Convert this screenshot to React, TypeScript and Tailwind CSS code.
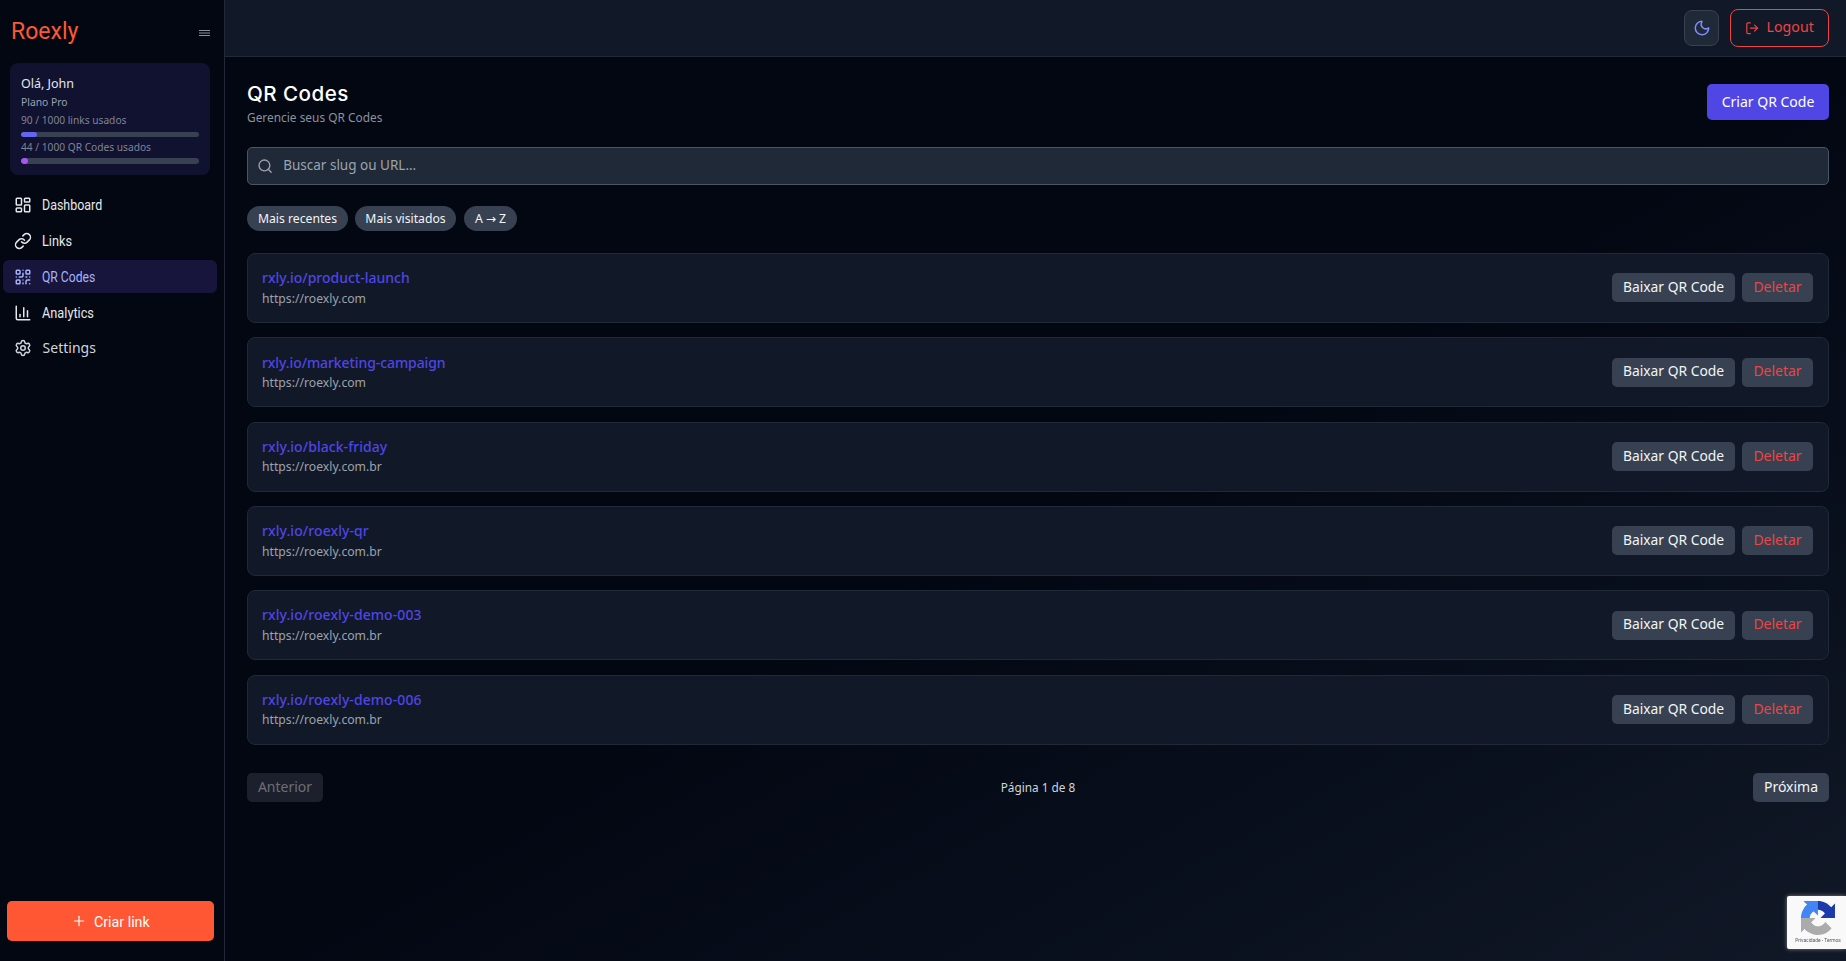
import React from 'react'
import { ChartColumn, LayoutDashboard, Link, LogOut, Moon, Plus, QrCode, Search, Settings } from 'lucide-react'

interface QrItem {
  slug: string
  url: string
  tracking: string
}

const qrCodes: QrItem[] = [
  { slug: 'rxly.io/product-launch', url: 'https://roexly.com', tracking: 'tracking-normal' },
  { slug: 'rxly.io/marketing-campaign', url: 'https://roexly.com', tracking: 'tracking-[-0.09px]' },
  { slug: 'rxly.io/black-friday', url: 'https://roexly.com.br', tracking: 'tracking-[0.06px]' },
  { slug: 'rxly.io/roexly-qr', url: 'https://roexly.com.br', tracking: 'tracking-[0.08px]' },
  { slug: 'rxly.io/roexly-demo-003', url: 'https://roexly.com.br', tracking: 'tracking-[0.07px]' },
  { slug: 'rxly.io/roexly-demo-006', url: 'https://roexly.com.br', tracking: 'tracking-[0.07px]' }
]

const navItems = [
  { label: 'Dashboard', icon: LayoutDashboard, scale: 'scale-x-[0.83]' },
  { label: 'Links', icon: Link, scale: 'scale-x-[0.85]' },
  { label: 'QR Codes', icon: QrCode, scale: 'scale-x-[0.81]', active: true },
  { label: 'Analytics', icon: ChartColumn, scale: 'scale-x-[0.85]' }
]

function UsageBar({ value, color }: { value: number; color: string }) {
  return (
    <div className="h-[5.4px] rounded-full bg-[#374151] overflow-hidden">
      <div className={`h-full rounded-full ${color}`} style={{ width: `${value}%` }}></div>
    </div>
  )
}

function Sidebar() {
  return (
    <aside className="w-[225px] shrink-0 flex flex-col bg-[#030712] border-r border-[#1f2937]">
      <div className="h-[63px] pl-[10.5px] pr-[14.5px] flex items-start justify-between">
        <span className="mt-[14px] text-[24.5px] leading-[34px] font-['Roboto',sans-serif] text-[#ff5733] origin-left scale-x-[0.94]">Roexly</span>
        <svg className="mt-[30px] w-[11px] h-[7px] text-[#8b919c]" viewBox="0 0 11 7" fill="none" stroke="currentColor">
          <path strokeWidth={1} d="M0 .5h11M0 3h11M0 5.500h11" />
        </svg>
      </div>

      <div className="mx-[10px] w-[200px] h-[112px] rounded-lg bg-[#111130] px-[11px] pt-3">
        <p className="text-[12.5px] leading-[18px] text-[#e5e7eb]">Olá, John</p>
        <p className="text-[10.3px] leading-[18px] text-[#9ca3af]">Plano Pro</p>
        <p className="text-[10.2px] leading-[18px] text-[#7f8596] mb-[3px]">90 / 1000 links usados</p>
        <UsageBar value={9} color="bg-[#6366f1]" />
        <p className="mt-px text-[10.2px] leading-[18px] text-[#7f8596] mb-[2px]">44 / 1000 QR Codes usados</p>
        <UsageBar value={4} color="bg-[#a855f7]" />
      </div>

      <nav className="mt-[13px] pl-[3px] pr-[7px] flex flex-col gap-[3px]">
        {navItems.map(({ label, icon: Icon, scale, active }) => (
          <a
            key={label}
            className={`h-[33px] pl-[10.8px] rounded-md flex items-center gap-[10.2px] ${active ? 'bg-[#17153b] text-[#a5b4fc]' : 'text-[#e5e7eb]'}`}
          >
            <Icon className="w-[18px] h-[18px]" strokeWidth={2} />
            <span className={`pt-px font-['Roboto',sans-serif] text-[15px] origin-left ${scale}`}>{label}</span>
          </a>
        ))}
        <a className="h-[33px] pl-[10.8px] rounded-md flex items-center gap-[10.8px] text-[14px] text-[#d1d5db]">
          <Settings className="w-[18px] h-[18px] -mt-px" strokeWidth={2} />
          <span className="pb-[3px]">Settings</span>
        </a>
      </nav>

      <button className="mt-auto mb-[20px] ml-[7px] mr-[10px] h-10 rounded-[5px] bg-[#ff5733] text-white flex items-center justify-center gap-[7px] font-['Roboto',sans-serif] text-[15px]">
        <Plus className="ml-[2px] w-4 h-4" strokeWidth={1.75} />
        <span className="pt-[2px] origin-left scale-x-[0.95]">Criar link</span>
      </button>
    </aside>
  )
}

function Header() {
  return (
    <header className="h-[57px] shrink-0 bg-[#111827] border-b border-[#1f2937] pr-[17px] flex items-center justify-end gap-[11px]">
      <button className="w-[35px] h-9 rounded-lg border border-[#374151] bg-[#1f2937] flex items-center justify-center text-[#818cf8]">
        <Moon className="w-[18px] h-[18px]" strokeWidth={2} />
      </button>
      <button className="w-[99px] h-[38px] rounded-lg border border-[#ef4444] flex items-center justify-center gap-[7px] text-[#ef4444] text-[14.2px]">
        <LogOut className="w-[14.4px] h-[14.4px]" strokeWidth={2} />
        <span className="pb-[2px]">Logout</span>
      </button>
    </header>
  )
}

function QrRow({ item }: { item: QrItem }) {
  return (
    <div className="h-[69.95px] rounded-lg border border-[#1f2937] bg-[#111827] pl-[14px] pr-[15px] flex items-center justify-between">
      <div className="pt-px">
        <p className={`text-[14px] leading-[20.6px] font-medium text-[#4f46e5] ${item.tracking}`}>{item.slug}</p>
        <p className="text-[12.2px] leading-[20px] text-[#9ca3af]">{item.url}</p>
      </div>
      <div className="flex gap-[7px]">
        <button className="w-[123px] h-[29px] pb-px rounded-[5px] bg-[#374151] text-[13.85px] text-[#f3f4f6]">Baixar QR Code</button>
        <button className="w-[71px] h-[29px] pb-px rounded-[5px] bg-[#374151] text-[13.95px] text-[#ef4444]">Deletar</button>
      </div>
    </div>
  )
}

function RecaptchaBadge() {
  return (
    <div className="fixed right-0 top-[896px] w-[59px] h-[53px] rounded-l-[2px] bg-[#f9f9f9] shadow-[0_0_4px_#808080] flex flex-col items-center">
      <svg className="mt-[5px] ml-[3px] w-[34px] h-[34px] shrink-0" viewBox="0 0 64 64">
        <path fill="#1c3aa9" d="M64 31.955l-.033-1.37V4.687l-7.16 7.16C50.948 4.674 42.033.093 32.05.093c-10.4 0-19.622 4.96-25.458 12.64l11.736 11.86a15.55 15.55 0 0 1 4.754-5.334c2.05-1.6 4.952-2.906 8.968-2.906.485 0 .86.057 1.135.163 4.976.393 9.288 3.14 11.828 7.124l-8.307 8.307L64 31.953" />
        <path fill="#4285f4" d="M31.862.094l-1.37.033H4.594l7.16 7.16C4.58 13.147 0 22.06 0 32.046c0 10.4 4.96 19.622 12.64 25.458L24.5 45.768a15.55 15.55 0 0 1-5.334-4.754c-1.6-2.05-2.906-4.952-2.906-8.968 0-.485.057-.86.163-1.135.393-4.976 3.14-9.288 7.124-11.828l8.307 8.307L31.86.095" />
        <path fill="#ababab" d="M.001 32.045l.033 1.37v25.898l7.16-7.16c5.86 7.173 14.774 11.754 24.76 11.754 10.4 0 19.622-4.96 25.458-12.64l-11.736-11.86a15.55 15.55 0 0 1-4.754 5.334c-2.05 1.6-4.952 2.906-8.968 2.906-.485 0-.86-.057-1.135-.163-4.976-.393-9.288-3.14-11.828-7.124l8.307-8.307L0 32.048" />
      </svg>
      <span className="ml-[3px] mt-px text-[4.9px] leading-[9px] whitespace-nowrap text-[#555] font-['Roboto',sans-serif]">Privacidade - Termos</span>
    </div>
  )
}

export default function App() {
  return (
    <div className="h-screen flex overflow-hidden bg-[#030712] font-['Noto_Sans',sans-serif]">
      <Sidebar />

      <div className="flex-1 flex flex-col">
        <Header />

        {/* Main Content */}
        <main className="flex-1 pl-[22px] pr-[17px] bg-linear-to-br from-[#030712] via-[#030712] to-[#111827]">
          <div className="pt-[23px] flex items-start justify-between">
            <div>
              <h1 className="text-[20.6px] leading-[27px] font-medium tracking-[0.45px] text-white font-['Inter',sans-serif]">QR Codes</h1>
              <p className="mt-px text-[11.9px] leading-[18px] text-[#8b929f]">Gerencie seus QR Codes</p>
            </div>
            <button className="mt-1 w-[122px] h-9 pb-[2px] rounded-[5px] bg-[#4f46e5] text-white text-[14px]">Criar QR Code</button>
          </div>

          <div className="mt-[21px] h-[38px] rounded-[5px] border border-[#4b5563] bg-[#1f2937] pl-[9px] flex items-center gap-[10px]">
            <Search className="w-[16.2px] h-[16.2px] text-[#9ca3af]" strokeWidth={2} />
            <span className="pb-[2px] text-[13.5px] text-[#9ca3af]">Buscar slug ou URL...</span>
          </div>

          <div className="mt-[21px] flex gap-[7px] text-[12.2px] text-[#f3f4f6]">
            <button className="w-[101px] h-[25px] pt-px rounded-full bg-[#374151]">Mais recentes</button>
            <button className="w-[101px] h-[25px] pt-px rounded-full bg-[#374151]">Mais visitados</button>
            <button className="ml-px w-[53px] h-[25px] pt-px rounded-full bg-[#374151] flex items-center justify-center gap-[3px]">
              <span>A</span>
              <span className="font-['DejaVu_Sans',sans-serif]">→</span>
              <span>Z</span>
            </button>
          </div>

          <div className="mt-[22px] flex flex-col gap-[14.4px]">
            {qrCodes.map((item) => (
              <QrRow key={item.slug} item={item} />
            ))}
          </div>

          <div className="mt-[28px] flex items-center justify-between">
            <button className="w-[76px] h-[29px] pb-[2px] rounded-[5px] bg-[#1b202c] text-[14px] text-[#6b6f78]">Anterior</button>
            <span className="pt-px text-[11.8px] text-[#d1d5db]">Página 1 de 8</span>
            <button className="w-[76px] h-[29px] pb-[2px] rounded-[5px] bg-[#374151] text-[14px] text-[#f3f4f6]">Próxima</button>
          </div>
        </main>
      </div>

      <RecaptchaBadge />
    </div>
  )
}
